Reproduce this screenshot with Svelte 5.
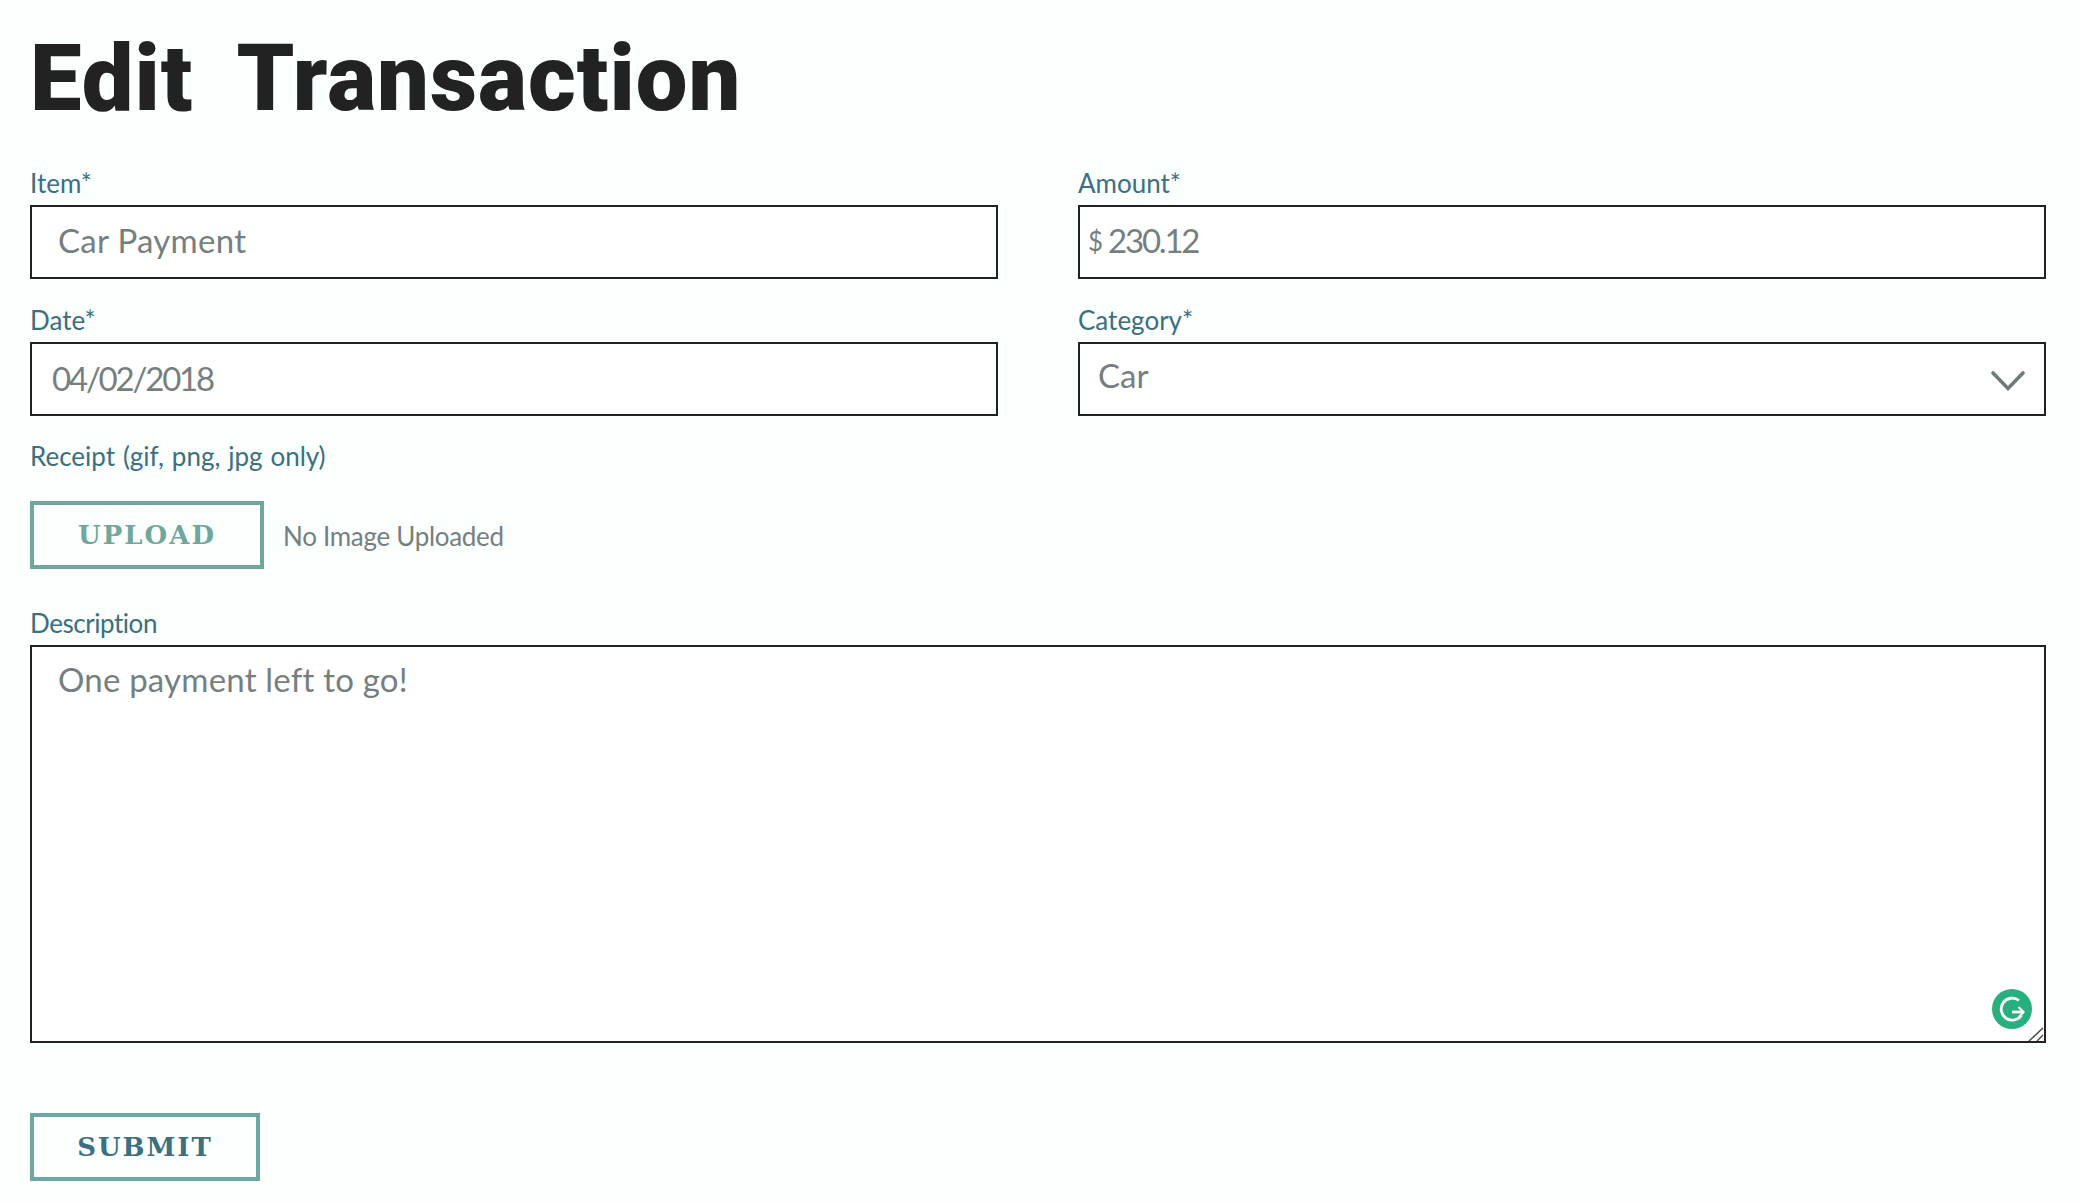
<script>
  let item = $state('Car Payment');
  let amount = $state('230.12');
  let date = $state('04/02/2018');
  let category = $state('Car');
  let description = $state('One payment left to go!');
</script>

<main class="page">
  <h1>Edit Transaction</h1>
  <form class="form" onsubmit={(e) => e.preventDefault()}>
    <div class="grid">
      <div class="field">
        <label for="item">Item*</label>
        <input id="item" class="pad-lg" bind:value={item} />
      </div>
      <div class="field">
        <label for="amount">Amount*</label>
        <div class="money">
          <span class="currency">$</span>
          <input id="amount" class="pad-money digits" bind:value={amount} />
        </div>
      </div>
      <div class="field">
        <label for="date">Date*</label>
        <input id="date" class="pad-sm digits" bind:value={date} />
      </div>
      <div class="field">
        <label for="category">Category*</label>
        <div class="select">
          <select id="category" bind:value={category}>
            <option>Car</option>
          </select>
          <svg class="chevron" viewBox="0 0 36 22" width="36" height="22" aria-hidden="true">
            <path d="M3 3 L18 18.5 L33 3" fill="none" stroke="#6f7b7b" stroke-width="3.6" stroke-linecap="round" />
          </svg>
        </div>
      </div>
    </div>

    <div class="receipt">
      <span class="label receipt-label">Receipt (gif, png, jpg only)</span>
      <div class="upload-row">
        <button type="button" class="btn upload">UPLOAD</button>
        <span class="status">No Image Uploaded</span>
      </div>
    </div>

    <div class="field desc">
      <label for="description">Description</label>
      <div class="area">
        <textarea id="description" bind:value={description}></textarea>
        <svg class="grammarly" viewBox="0 0 40 40" width="40" height="40" aria-hidden="true">
          <circle cx="20" cy="20" r="20" fill="#27b07e" />
          <path d="M27 11.5 A11 11 0 1 0 29.5 26" fill="none" stroke="#fff" stroke-width="2.8" />
          <path d="M20 23 H31" fill="none" stroke="#fff" stroke-width="2.8" />
          <path d="M26.5 18 L31.5 23 L27 28" fill="none" stroke="#fff" stroke-width="2.2" />
        </svg>
        <svg class="grip" viewBox="0 0 16 15" width="16" height="15" aria-hidden="true">
          <path d="M1 14 L15 1 M9 14 L15 8" fill="none" stroke="#444" stroke-width="1.4" />
        </svg>
      </div>
    </div>

    <button type="submit" class="btn submit">SUBMIT</button>
  </form>
</main>

<style>
  :global(body) {
    margin: 0;
    background: #fbfffe;
  }
  .page {
    box-sizing: border-box;
    width: 2080px;
    height: 1202px;
    padding: 0 34px 0 30px;
    overflow: hidden;
    font-family: "Lato", "Open Sans", sans-serif;
  }
  h1 {
    margin: 0;
    padding-top: 27px;
    height: 136px;
    box-sizing: border-box;
    font-family: "Roboto", "Open Sans", sans-serif;
    font-size: 92px;
    line-height: 104px;
    font-weight: 900;
    letter-spacing: 1px;
    word-spacing: 22px;
    color: #222;
  }
  .form {
    display: flex;
    flex-direction: column;
  }
  .grid {
    display: grid;
    grid-template-columns: 968px 968px;
    column-gap: 80px;
    row-gap: 26px;
    padding-top: 32px;
  }
  .field {
    display: flex;
    flex-direction: column;
    gap: 6px;
  }
  label, .label {
    display: block;
    font-size: 26px;
    line-height: 31px;
    color: #3c6f80;
  }
  .receipt-label {
    word-spacing: 1.2px;
  }
  label[for="description"] {
    letter-spacing: -0.45px;
  }
  input, select, textarea {
    display: block;
    box-sizing: border-box;
    width: 100%;
    margin: 0;
    border: 2px solid #222;
    border-radius: 0;
    background: #fff;
    outline: none;
    font-family: inherit;
    font-size: 33px;
    letter-spacing: 0.3px;
    color: #767f7f;
  }
  input, select {
    height: 74px;
  }
  .digits {
    letter-spacing: -2.2px;
  }
  .pad-lg { padding: 0 26px 4px; }
  .pad-sm { padding: 0 20px 2px; }
  .pad-money { padding: 0 28px 4px; }
  .money, .select, .area {
    position: relative;
  }
  .currency {
    position: absolute;
    left: 10px;
    top: 20px;
    font-size: 26px;
    line-height: 32px;
    color: #767f7f;
  }
  select {
    appearance: none;
    padding: 0 18px 8px;
    letter-spacing: 0;
  }
  .chevron {
    position: absolute;
    right: 20px;
    top: 28px;
    pointer-events: none;
  }
  .receipt {
    padding-top: 25px;
  }
  .upload-row {
    display: flex;
    align-items: center;
    gap: 19px;
    margin-top: 29px;
  }
  .btn {
    box-sizing: border-box;
    height: 68px;
    border: 4px solid #6fa79c;
    border-radius: 0;
    background: transparent;
    padding: 0;
    font-family: "DejaVu Serif", "Liberation Serif", serif;
    font-size: 26px;
    font-weight: 700;
    letter-spacing: 2px;
  }
  .upload {
    width: 234px;
    color: #6fa79c;
  }
  .status {
    font-size: 26px;
    letter-spacing: -0.3px;
    padding-top: 2px;
    color: #767f7f;
  }
  .desc {
    margin-top: 39px;
  }
  textarea {
    height: 398px;
    padding: 12px 26px;
    line-height: 40px;
    letter-spacing: 0.2px;
    resize: none;
  }
  .grammarly {
    position: absolute;
    right: 14px;
    bottom: 14px;
  }
  .grip {
    position: absolute;
    right: 2px;
    bottom: 1px;
    pointer-events: none;
  }
  .submit {
    width: 230px;
    margin-top: 70px;
    color: #3c6f80;
  }
</style>
